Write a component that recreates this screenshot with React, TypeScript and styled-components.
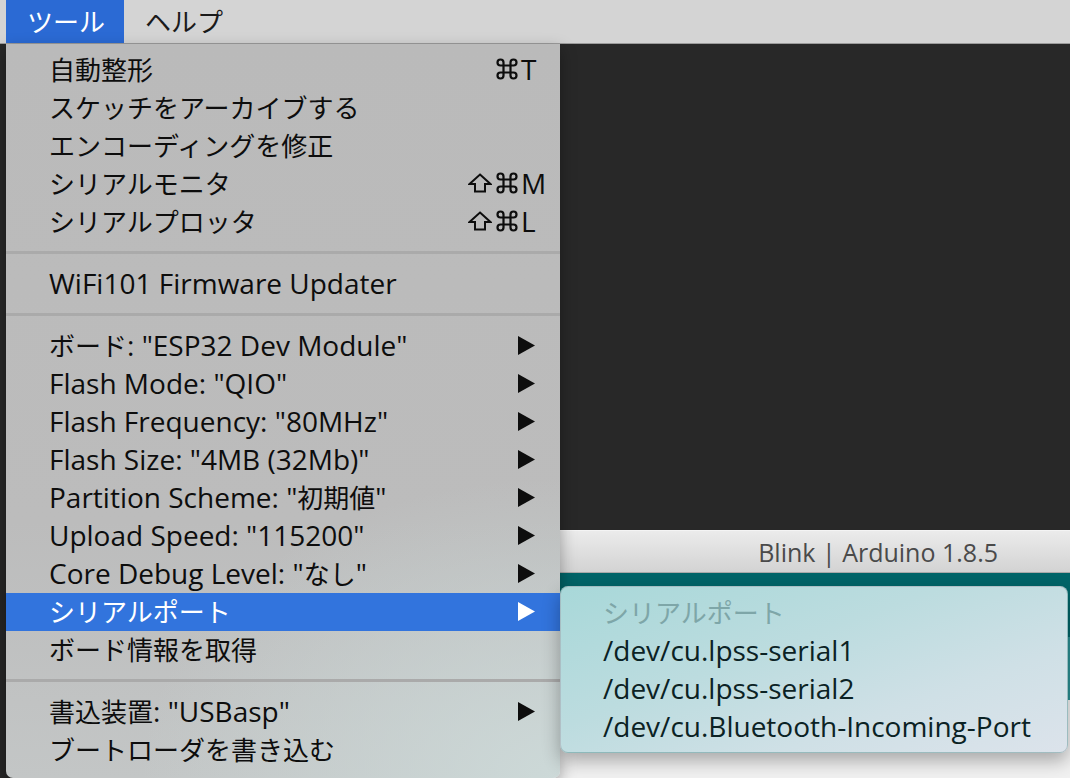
import React from "react";
import styled, { createGlobalStyle } from "styled-components";

const Global = createGlobalStyle`
  html, body { margin: 0; padding: 0; background: #262626; }
  body {
    width: 1070px; height: 778px; overflow: hidden;
    font-family: "Open Sans", "Noto Sans CJK JP", sans-serif;
    -webkit-font-smoothing: antialiased;
  }
`;

const Screen = styled.div`
  position: relative;
  width: 1070px;
  height: 778px;
  display: flex;
  flex-direction: column;
  background: #262626;
  overflow: hidden;
`;

const MenuBar = styled.div`
  height: 44px;
  box-sizing: border-box;
  border-bottom: 1px solid #9c9c9c;
  background: #d4d4d4;
  display: flex;
  align-items: stretch;
  padding-left: 6px;
`;

const MenuTitle = styled.div<{ $active?: boolean }>`
  display: flex;
  align-items: center;
  padding: 0 19px 2px 21px;
  font-size: 26px;
  color: ${(p) => (p.$active ? "#ffffff" : "#1a1a1a")};
  background: ${(p) => (p.$active ? "#2b6ad4" : "transparent")};
`;

const Desktop = styled.div`
  flex: 1;
  display: flex;
  flex-direction: column;
`;

const DarkArea = styled.div`
  height: 486px;
  background: #282828;
`;

const ArduinoWindow = styled.div`
  flex: 1;
  margin-left: 120px;
  display: flex;
  flex-direction: column;
`;

const TitleBar = styled.div`
  height: 43px;
  box-sizing: border-box;
  border-top: 1px solid #f4f4f4;
  border-bottom: 1px solid #a9a9a9;
  background: linear-gradient(#ebebeb, #d3d3d3);
  display: flex;
  align-items: center;
  justify-content: flex-end;
  padding-right: 72px;
  font-size: 25px;
  color: #4a4a4a;
`;

const Toolbar = styled.div`
  height: 64px;
  background: #006468;
`;

const TabBar = styled.div`
  height: 63px;
  background: #2b8e92;
`;

const Editor = styled.div`
  flex: 1;
  background: #f1f1f1;
`;

const MenuPanel = styled.div`
  position: absolute;
  left: 6px;
  top: 44px;
  width: 554px;
  height: 734px;
  box-sizing: border-box;
  padding-top: 7px;
  border-radius: 0 0 7px 7px;
  background:
    radial-gradient(ellipse 420px 300px at 100% 100%, rgba(205, 218, 217, 0.95) 0%, rgba(205, 218, 217, 0) 100%),
    linear-gradient(#bababa 0%, #bcbcbc 65%, #c3c6c6 100%);
  box-shadow: 0 6px 16px rgba(0, 0, 0, 0.35);
  display: flex;
  flex-direction: column;
`;

const Row = styled.div<{ $hl?: boolean }>`
  height: 38px;
  box-sizing: border-box;
  flex: none;
  display: flex;
  align-items: center;
  padding: 0 12px 2px 43px;
  font-size: 28px;
  color: ${(p) => (p.$hl ? "#ffffff" : "#0d0d0d")};
  background: ${(p) => (p.$hl ? "#3274dd" : "transparent")};
`;

const Label = styled.span`
  flex: 1;
  white-space: nowrap;
`;

const Cjk = styled.span`
  font-size: 26px;
`;

const Shortcut = styled.span`
  display: flex;
  align-items: center;
`;

const Mods = styled.span`
  width: 60px;
  display: flex;
  justify-content: flex-end;
  align-items: center;
  gap: 4px;
  margin-right: 3px;
`;

const Key = styled.span`
  width: 27px;
`;

const Arrow = styled.span`
  width: 30px;
  display: flex;
  align-items: center;
`;

const Separator = styled.div`
  height: 3px;
  flex: none;
  margin: 10px 0 11px;
  background: #aaaaaa;
`;

const SubMenu = styled.div`
  position: absolute;
  left: 560px;
  top: 586px;
  width: 508px;
  height: 167px;
  box-sizing: border-box;
  padding-top: 7px;
  border-radius: 8px;
  border: 1px solid rgba(60, 90, 95, 0.25);
  background: linear-gradient(160deg, #a8d8d9 0%, #bcdcdf 40%, #cfe0e6 70%, #dce3eb 100%);
  box-shadow: 0 8px 18px rgba(0, 0, 0, 0.3);
  display: flex;
  flex-direction: column;
`;

const SubRow = styled.div<{ $disabled?: boolean }>`
  height: 38px;
  box-sizing: border-box;
  display: flex;
  align-items: center;
  padding: 0 0 2px 42px;
  font-size: 28px;
  color: ${(p) => (p.$disabled ? "#7ea6a8" : "#0b2224")};
  white-space: nowrap;
`;

const Triangle = () => (
  <svg width="17" height="19" viewBox="0 0 17 19">
    <polygon points="0,0 17,9.5 0,19" fill="currentColor" />
  </svg>
);

const ShiftIcon = () => (
  <svg width="24" height="20" viewBox="0 0 24 20">
    <path
      d="M12 1.5 L22.5 11 H17 V18.5 H7 V11 H1.5 Z"
      fill="none"
      stroke="currentColor"
      strokeWidth="2"
      strokeLinejoin="miter"
    />
  </svg>
);

const CmdIcon = () => (
  <svg width="22" height="22" viewBox="0 0 22 22">
    <path
      d="M7.5 7.5 H14.5 V14.5 H7.5 Z M7.5 7.5 V4.5 A3 3 0 1 0 4.5 7.5 H7.5 M14.5 7.5 V4.5 A3 3 0 1 1 17.5 7.5 H14.5 M14.5 14.5 V17.5 A3 3 0 1 0 17.5 14.5 H14.5 M7.5 14.5 V17.5 A3 3 0 1 1 4.5 14.5 H7.5"
      fill="none"
      stroke="currentColor"
      strokeWidth="2.2"
    />
  </svg>
);

const cjkRe = /([\u3000-\u30ff\u3400-\u9fff\uff00-\uffef]+)/;

const MixedText = ({ text }: { text: string }) => (
  <>
    {text.split(cjkRe).map((part, i) =>
      part === "" ? null : cjkRe.test(part) ? <Cjk key={i}>{part}</Cjk> : <React.Fragment key={i}>{part}</React.Fragment>
    )}
  </>
);

type Item =
  | { kind: "sep" }
  | { kind: "item"; label: string; shift?: boolean; key?: string; sub?: boolean; hl?: boolean };

const items: Item[] = [
  { kind: "item", label: "自動整形", key: "T" },
  { kind: "item", label: "スケッチをアーカイブする" },
  { kind: "item", label: "エンコーディングを修正" },
  { kind: "item", label: "シリアルモニタ", shift: true, key: "M" },
  { kind: "item", label: "シリアルプロッタ", shift: true, key: "L" },
  { kind: "sep" },
  { kind: "item", label: "WiFi101 Firmware Updater" },
  { kind: "sep" },
  { kind: "item", label: 'ボード: "ESP32 Dev Module"', sub: true },
  { kind: "item", label: 'Flash Mode: "QIO"', sub: true },
  { kind: "item", label: 'Flash Frequency: "80MHz"', sub: true },
  { kind: "item", label: 'Flash Size: "4MB (32Mb)"', sub: true },
  { kind: "item", label: 'Partition Scheme: "初期値"', sub: true },
  { kind: "item", label: 'Upload Speed: "115200"', sub: true },
  { kind: "item", label: 'Core Debug Level: "なし"', sub: true },
  { kind: "item", label: "シリアルポート", sub: true, hl: true },
  { kind: "item", label: "ボード情報を取得" },
  { kind: "sep" },
  { kind: "item", label: '書込装置: "USBasp"', sub: true },
  { kind: "item", label: "ブートローダを書き込む" },
];

const ports = ["/dev/cu.lpss-serial1", "/dev/cu.lpss-serial2", "/dev/cu.Bluetooth-Incoming-Port"];

export default function App() {
  return (
    <>
      <Global />
      <Screen>
        <MenuBar>
          <MenuTitle $active>ツール</MenuTitle>
          <MenuTitle>ヘルプ</MenuTitle>
        </MenuBar>
        <Desktop>
          <DarkArea />
          <ArduinoWindow>
            <TitleBar>Blink | Arduino 1.8.5</TitleBar>
            <Toolbar />
            <TabBar />
            <Editor />
          </ArduinoWindow>
        </Desktop>

        <MenuPanel>
          {items.map((it, i) =>
            it.kind === "sep" ? (
              <Separator key={i} />
            ) : (
              <Row key={i} $hl={it.hl}>
                <Label>
                  <MixedText text={it.label} />
                </Label>
                {it.key && (
                  <Shortcut>
                    <Mods>
                      {it.shift && <ShiftIcon />}
                      <CmdIcon />
                    </Mods>
                    <Key>{it.key}</Key>
                  </Shortcut>
                )}
                {it.sub && (
                  <Arrow>
                    <Triangle />
                  </Arrow>
                )}
              </Row>
            )
          )}
        </MenuPanel>

        <SubMenu>
          <SubRow $disabled>
            <MixedText text="シリアルポート" />
          </SubRow>
          {ports.map((p) => (
            <SubRow key={p}>{p}</SubRow>
          ))}
        </SubMenu>
      </Screen>
    </>
  );
}
